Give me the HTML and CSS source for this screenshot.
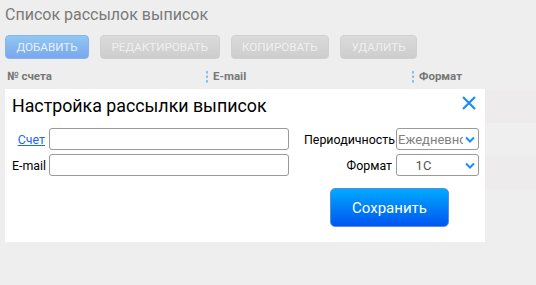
FILE: index.html
```html
<!DOCTYPE html>
<html lang="ru">
<head>
    <meta charset="UTF-8">
    <title>Список рассылок выписок</title>
    <link rel="stylesheet" href="styles.css">
</head>
<body>

    <!-- Страница списка -->
    <div class="page">
        <h1 class="page-title">Список рассылок выписок</h1>

        <div class="toolbar">
            <button class="btn btn-primary">Добавить</button>
            <button class="btn">Редактировать</button>
            <button class="btn">Копировать</button>
            <button class="btn">Удалить</button>
        </div>

        <div class="grid">
            <div class="grid-head">
                <div class="col col-account">№ счета</div>
                <div class="col col-email"><span class="sep"></span>E-mail</div>
                <div class="col col-format"><span class="sep"></span>Формат</div>
            </div>
            <div class="grid-row odd"></div>
            <div class="grid-row"></div>
            <div class="grid-row odd"></div>
        </div>
    </div>

    <!-- Окно настройки -->
    <div class="dialog">
        <div class="dialog-head">
            <h2>Настройка рассылки выписок</h2>
            <svg class="close" width="16" height="16" viewBox="0 0 16 16">
                <path d="M2 2 L14 14 M14 2 L2 14" stroke="#1a8cff" stroke-width="2.2" fill="none"/>
            </svg>
        </div>

        <div class="form">
            <div class="form-left">
                <div class="field">
                    <a href="#" class="label link">Счет</a>
                    <input type="text" class="input">
                </div>
                <div class="field">
                    <span class="label">E-mail</span>
                    <input type="text" class="input">
                </div>
            </div>
            <div class="form-right">
                <div class="field">
                    <span class="label">Периодичность</span>
                    <div class="select">
                        <span class="value muted">Ежедневно</span>
                        <svg class="chev" width="10" height="7" viewBox="0 0 10 7"><path d="M1 1.5 L5 5.5 L9 1.5" stroke="#1a8cff" stroke-width="2" fill="none"/></svg>
                    </div>
                </div>
                <div class="field">
                    <span class="label">Формат</span>
                    <div class="select">
                        <span class="value center">1С</span>
                        <svg class="chev" width="10" height="7" viewBox="0 0 10 7"><path d="M1 1.5 L5 5.5 L9 1.5" stroke="#1a8cff" stroke-width="2" fill="none"/></svg>
                    </div>
                </div>
            </div>
        </div>

        <div class="dialog-foot">
            <button class="btn-save">Сохранить</button>
        </div>
    </div>

</body>
</html>
```

FILE: styles.css
```css
/* Общие стили */
body {
    margin: 0;
    background-color: #eeeeee;
    font-family: Roboto, "Noto Sans", sans-serif;
    width: 536px;
    height: 285px;
    overflow: hidden;
    position: relative;
}

.page {
    padding: 0 0 0 5px;
}

.page-title {
    margin: 0;
    padding-top: 2px;
    font-size: 16px;
    font-weight: normal;
    color: #7a7a7a;
    height: 33px;
    line-height: 26px;
}

/* Панель кнопок */
.toolbar {
    display: flex;
    gap: 11px;
    height: 24px;
}

    .toolbar .btn {
        height: 24px;
        padding: 0 10.5px;
        border: 1px solid #d0d0d0;
        border-radius: 4px;
        background: linear-gradient(#dbdbdb, #cdcdcd);
        color: #f0f0f0;
        font-family: inherit;
        font-size: 11.6px;
        text-transform: uppercase;
    }

    .toolbar .btn-primary {
        border-color: #86b4ee;
        background: linear-gradient(#90c8f3, #79a6ee);
        color: #e9f1fd;
    }

/* Таблица */
.grid-head {
    display: flex;
    height: 28px;
    align-items: center;
    padding-top: 3px;
    font-size: 11.5px;
    font-weight: bold;
    color: #777;
}

    .grid-head .col {
        display: flex;
        align-items: center;
    }

    .grid-head .col-account {
        width: 199px;
        padding-left: 2px;
    }

    .grid-head .col-email {
        width: 206px;
    }

    .grid-head .sep {
        width: 2px;
        height: 13px;
        margin-right: 5px;
        background: radial-gradient(circle, #8ab8ee 1px, transparent 1.2px) 0 0 / 2px 4.5px repeat-y;
    }

.grid-row {
    height: 33px;
    background-color: #efefef;
}

    .grid-row.odd {
        background-color: #eeebed;
    }

/* Диалог */
.dialog {
    position: absolute;
    left: 5px;
    top: 89px;
    width: 480px;
    height: 153px;
    background-color: #fff;
    box-sizing: border-box;
    padding: 0 6px 0 7px;
}

.dialog-head {
    display: flex;
    justify-content: space-between;
    align-items: flex-start;
    height: 37px;
}

    .dialog-head h2 {
        margin: 0;
        padding-top: 5px;
        font-size: 17.8px;
        line-height: 24px;
        font-weight: normal;
        color: #000;
    }

    .dialog-head .close {
        margin: 6px 2px 0 0;
    }

.form {
    display: flex;
    justify-content: space-between;
    margin-top: 1px;
    padding-top: 1px;
}

.form-left .label {
    width: 33px;
}

.form-right .label {
    width: 88px;
}

.field {
    display: flex;
    align-items: center;
    gap: 4px;
    height: 22px;
    margin-bottom: 4px;
}

    .field .label {
        flex-shrink: 0;
        white-space: nowrap;
        text-align: right;
        font-size: 12.4px;
        color: #000;
    }

    .field .link {
        color: #1a66ff;
        text-decoration: underline;
    }

.input {
    width: 240px;
    height: 22px;
    box-sizing: border-box;
    border: 1px solid #9a9a9a;
    border-radius: 3px;
    margin: 0;
}

.select {
    width: 83px;
    height: 22px;
    box-sizing: border-box;
    border: 1px solid #9a9a9a;
    border-radius: 3px;
    display: flex;
    align-items: center;
    padding: 0 3px 0 1px;
    font-size: 13px;
    overflow: hidden;
    flex-shrink: 0;
}

    .select .value {
        flex: 1;
        white-space: nowrap;
        overflow: hidden;
    }

    .select .muted {
        color: #808080;
    }

    .select .center {
        text-align: center;
        color: #555;
        padding-right: 14px;
    }

    .select .chev {
        margin-left: 2px;
        flex-shrink: 0;
    }

.dialog-foot {
    display: flex;
    justify-content: flex-end;
    padding-right: 30px;
    margin-top: 8px;
}

.btn-save {
    width: 119px;
    height: 39px;
    border: 1px solid #5a8fd8;
    border-radius: 5px;
    background: linear-gradient(#00aaff, #0055f0);
    color: #fff;
    font-family: inherit;
    font-size: 15px;
}
```
